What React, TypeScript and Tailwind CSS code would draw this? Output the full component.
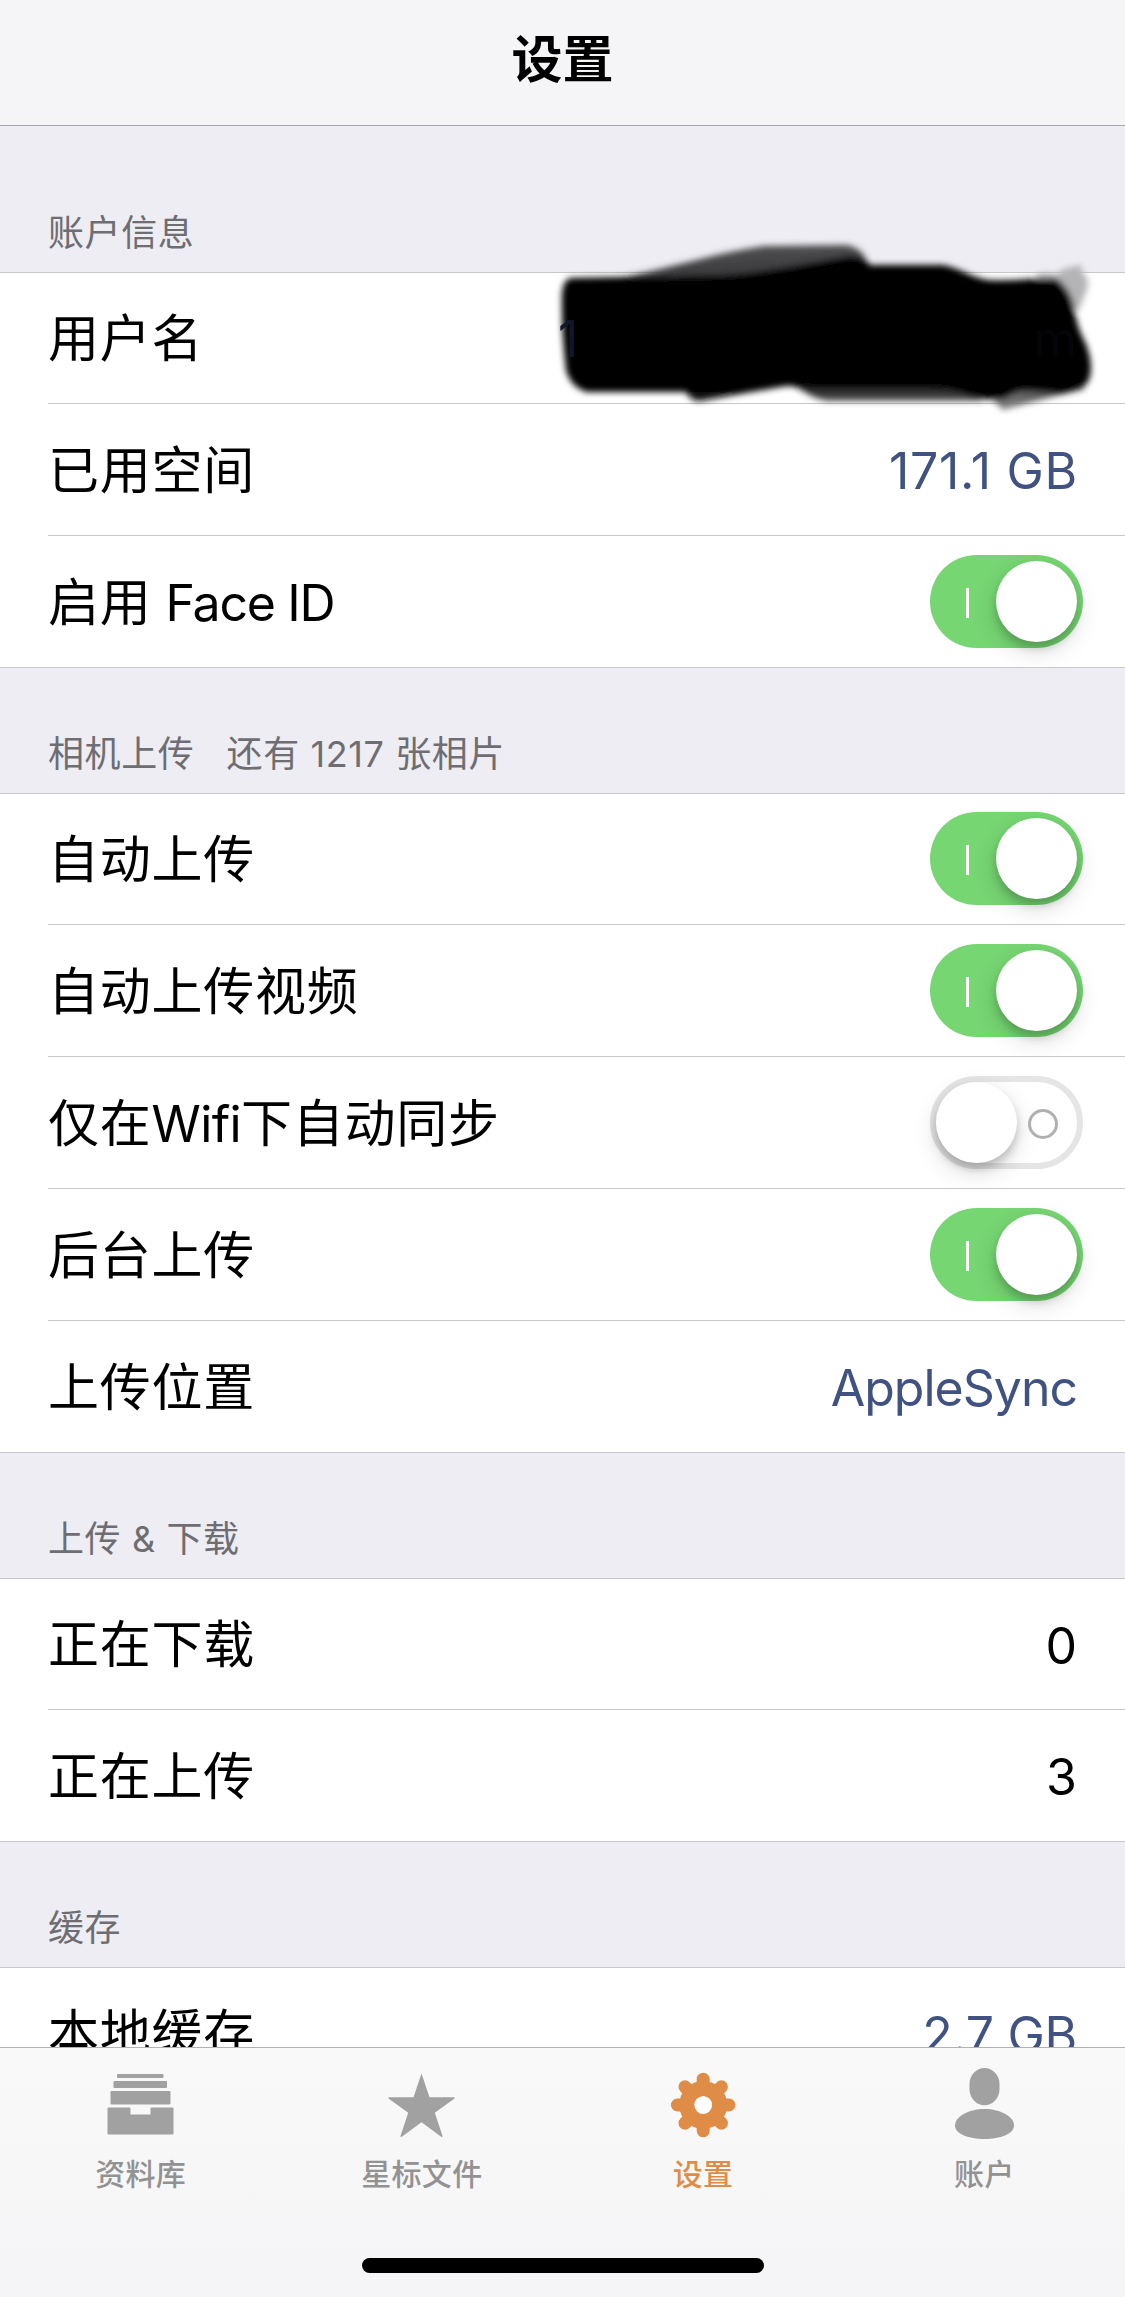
import type { ReactNode } from "react";

const cjk = "font-['Inter','Noto_Sans_CJK_SC',sans-serif]";

function Switch({ on }: { on: boolean }) {
  return on ? (
    <div className="mr-[-6px] mb-[2px] flex h-[93px] w-[153px] items-center justify-end rounded-full bg-[#76d672] p-1.5">
      <div className="mr-[27px] mt-[3px] h-[30px] w-[3px] bg-white" />
      <div className="size-[81px] rounded-full bg-white shadow-[0_9px_24px_rgba(0,0,0,0.15),0_6px_9px_rgba(0,0,0,0.18)]" />
    </div>
  ) : (
    <div className="mr-[-6px] mb-[2px] flex h-[93px] w-[153px] items-center rounded-full border-[6px] border-[#e5e5e5] bg-white">
      <div className="size-[81px] shrink-0 rounded-full bg-white shadow-[0_9px_24px_rgba(0,0,0,0.15),0_6px_9px_rgba(0,0,0,0.18)]" />
      <div className="mt-[3px] ml-[11px] size-[30px] shrink-0 rounded-full border-[3px] border-[#b0b0b0]" />
    </div>
  );
}

function Row({ label, children, last = false }: { label: ReactNode; children: ReactNode; last?: boolean }) {
  return (
    <div className="relative flex h-[132px] items-center justify-between bg-white pr-12 pl-12 first:h-[131px]">
      <span className="text-[51px] leading-none tracking-[0.75px] whitespace-pre text-black">{label}</span>
      {children}
      <div className={last ? "absolute right-0 bottom-0 left-0 h-px bg-[#c8c7cc]" : "absolute right-0 bottom-0 left-12 h-px bg-[#c8c7cc]"} />
    </div>
  );
}

const tones = {
  dark: "pt-[2px] text-[50px] leading-none text-black",
  wide: "pt-[2px] text-[50px] leading-none tracking-[0.7px] -mr-px text-[#3f5282]",
  link: "pt-[2px] text-[50px] leading-none tracking-[-0.3px] text-[#3f5282]",
  tight: "pt-[2px] text-[50px] leading-none tracking-[-1px] text-[#3f5282]",
};

function Value({ children, tone = "link" }: { children: ReactNode; tone?: keyof typeof tones }) {
  return <span className={tones[tone]}>{children}</span>;
}

function Section({ title, first = false, children }: { title: string; first?: boolean; children: ReactNode }) {
  return (
    <section>
      <div className={first ? "flex h-[146px] items-end px-12 pb-5" : "flex h-[125px] items-end px-12 pb-5"}>
        <h2 className="text-[36px] leading-[37px] tracking-[0.6px] whitespace-pre text-[#6d6d72]">{title}</h2>
      </div>
      <div className="border-t border-[#c8c7cc]">{children}</div>
    </section>
  );
}

function Scribble() {
  return (
    <svg className="absolute -top-[43px] left-[540px] z-10 h-[190px] w-[585px] overflow-visible" viewBox="0 0 585 190">
      <defs>
        <filter id="soft" x="-10%" y="-20%" width="120%" height="140%">
          <feGaussianBlur stdDeviation="3.2" />
        </filter>
        <linearGradient id="lobe" x1="0" y1="0" x2="0.25" y2="1">
          <stop offset="0" stopColor="#555557" />
          <stop offset="1" stopColor="#303032" />
        </linearGradient>
        <linearGradient id="edge" x1="0" y1="0" x2="0" y2="1">
          <stop offset="0" stopColor="#000" />
          <stop offset="1" stopColor="#555" />
        </linearGradient>
        <linearGradient id="tail" x1="0" y1="1" x2="1" y2="0">
          <stop offset="0" stopColor="#888" />
          <stop offset="1" stopColor="#1c1c1c" />
        </linearGradient>
      </defs>
      <g filter="url(#soft)">
        <path d="M84 47C130 38 180 22 224 16L306 15C320 17 328 26 330 45L250 60Z" fill="url(#lobe)" />
        <path d="M495 46Q502 40 516 45Q524 36 534 37L540 34L543 44Q551 48 546 62L538 82L520 60Z" fill="#b4b4b6" />
        <path d="M246 152C265 160 272 170 290 171H440L480 150Z" fill="url(#edge)" />
        <path d="M450 167L463 180Q480 175 519 165L544 159L550 135L475 150Z" fill="url(#tail)" />
        <path d="M144 158Q150 172 160 171L246 156V140H150Z" fill="#111" />
        <path d="M30 48L187 45C230 41 265 34 298 28Q320 22 330 35L403 35C420 38 430 47 448 50Q475 51 500 48L516 48Q530 58 534 76Q536 96 546 114Q554 135 549 150Q543 160 519 164Q490 160 478 162L462 170Q440 170 426 165Q410 158 390 158L290 158L246 156C215 159 190 162 170 162H144L46 162Q30 156 26 140Q21 100 22 62Q24 50 30 48Z" fill="#000" />
      </g>
    </svg>
  );
}

function Tab({ label, active = false, children }: { label: string; active?: boolean; children: ReactNode }) {
  return (
    <div className={active ? "flex flex-1 flex-col items-center text-[#df8d46]" : "flex flex-1 flex-col items-center text-[#929292]"}>
      <svg className="mt-[17px] h-[80px] w-[80px]" viewBox="0 0 80 80">
        {children}
      </svg>
      <span className="mt-[14px] text-[30px] leading-[30px] font-medium tracking-[0.3px]">{label}</span>
    </div>
  );
}

export default function App() {
  return (
    <div className={`${cjk} flex h-[2297px] w-[1125px] flex-col overflow-hidden bg-[#eeedf3]`}>
      <header className="flex h-[126px] shrink-0 items-start justify-center border-b border-[#a7a7aa] bg-[#f5f5f7] pt-[34px]">
        <h1 className="text-[51px] leading-[51px] font-semibold text-black">设置</h1>
      </header>

      <main className="h-[1921px] shrink-0 overflow-hidden">
        <Section title="账户信息" first>
          <div className="relative flex h-[131px] items-center justify-between bg-white pr-12 pl-12">
            <span className="text-[51px] leading-none tracking-[0.75px] text-black">用户名</span>
            <Scribble />
            <span className="relative z-20 flex w-[519px] justify-between text-[50px] leading-none">
              <span className="text-[#10162c]">1</span>
              <span className="text-[#040509]">m</span>
            </span>
            <div className="absolute right-0 bottom-0 left-12 h-px bg-[#c8c7cc]" />
          </div>
          <Row label="已用空间"><Value tone="wide">171.1 GB</Value></Row>
          <Row label={<>启用 <span className="-ml-px text-[50px] tracking-[-1.3px]">Face ID</span></>} last><Switch on /></Row>
        </Section>

        <Section title="相机上传   还有 1217 张相片">
          <Row label="自动上传"><Switch on /></Row>
          <Row label="自动上传视频"><Switch on /></Row>
          <Row label={<>仅在<span className="text-[50px] tracking-[-0.6px]">Wifi</span>下自动同步</>}><Switch on={false} /></Row>
          <Row label="后台上传"><Switch on /></Row>
          <Row label="上传位置" last><Value tone="tight">AppleSync</Value></Row>
        </Section>

        <Section title="上传 & 下载">
          <Row label="正在下载"><Value tone="dark">0</Value></Row>
          <Row label="正在上传" last><Value tone="dark">3</Value></Row>
        </Section>

        <Section title="缓存">
          <Row label="本地缓存"><Value>2.7 GB</Value></Row>
        </Section>
      </main>

      <footer className="flex h-[250px] shrink-0 flex-col items-center border-t border-[#b2b2b4] bg-linear-to-b from-[#f9f9f9] to-[#f5f5f7]">
        <nav className="flex w-full">
          <Tab label="资料库">
            <g fill="#a1a1a1" transform="translate(-1 0)">
              <rect x="17" y="9" width="46.5" height="4" rx="1" />
              <rect x="13.5" y="16" width="53.5" height="7" rx="1" />
              <rect x="10.5" y="26" width="60" height="13.5" rx="1" />
              <path d="M8.500 42.500H29.500Q30.500 42.500 30.500 43.500V49.500H50.500V43.500Q50.500 42.500 51.500 42.500H72.500Q73.500 42.500 73.500 43.500V68.500Q73.500 69.500 72.500 69.500H8.500Q7.500 69.500 7.500 68.500V43.500Q7.500 42.500 8.500 42.500Z" />
            </g>
          </Tab>
          <Tab label="星标文件">
            <path d="M39.500 8.500L47.500 32.200H72.500V33.500L52.800 47.700L60.700 71.500L59.500 72L39.500 57.300L19.500 72L18.300 71.500L26.200 47.700L6.500 33.500V32.200H31.500Z" fill="#a1a1a1" />
          </Tab>
          <Tab label="设置" active>
            <g transform="translate(40.200 40)">
              <circle r="16.300" fill="none" stroke="#df8d46" strokeWidth="15.200" />
              <g stroke="#df8d46" strokeWidth="13" strokeLinecap="round">
                <path d="M0 -19V-25.800M0 19V25.800M-19 0H-25.800M19 0H25.800" />
                <path d="M-15 -15L-18.200 -18.200M15 -15L18.200 -18.200M-15 15L-18.200 18.200M15 15L18.200 18.200" />
              </g>
              <circle r="8.700" fill="#fff" />
            </g>
          </Tab>
          <Tab label="账户">
            <g fill="#a1a1a1">
              <rect x="25.500" y="3" width="30" height="37.300" rx="15" ry="16" />
              <path d="M40.500 44C57 44 70 52 70 60.500C70 69 56 74 40.500 74C25 74 11 69 11 60.500C11 52 24 44 40.500 44Z" />
            </g>
          </Tab>
        </nav>
        <div className="mt-[69px] h-[15px] w-[402px] rounded-full bg-black" />
      </footer>
    </div>
  );
}
